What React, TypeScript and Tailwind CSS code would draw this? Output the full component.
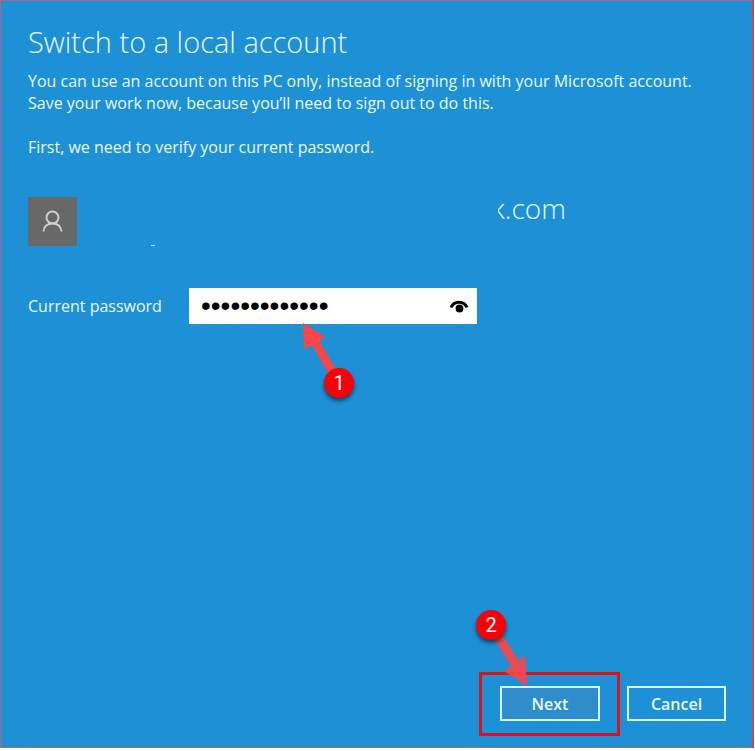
import React, { useState } from 'react';

interface CalloutProps {
  label: string;
  className: string;
  direction: 'up' | 'down';
}

// Numbered red marker with an arrow, laid over the control it points at
const Callout: React.FC<CalloutProps> = ({ label, className, direction }) => (
  <div className={`absolute z-10 pointer-events-none w-[60px] h-[84px] ${className}`}>
    <svg className="absolute inset-0" width="60" height="84" viewBox="0 0 60 84" aria-hidden="true">
      {direction === 'up' ? (
        <path d="M4 3L26 17L20 21L38 51L30 55L13 25L5 29Z" fill="#fb4548" />
      ) : (
        <path d="M17 27L25 23L42 50L49 46L51 76L28 61L35 56Z" fill="#fb4548" fillOpacity="0.9" />
      )}
    </svg>
    <span
      className={`absolute flex items-center justify-center w-[30px] h-[30px] rounded-full bg-[#fb0007] text-white text-xl leading-none font-normal font-['Roboto',sans-serif] shadow-[0_3px_4px_rgba(0,0,0,0.55)] ${direction === 'up' ? 'left-[25px] top-[48px]' : 'left-0 top-0'}`}
    >
      {label}
    </span>
  </div>
);

const App: React.FC = () => {
  const [password, setPassword] = useState('passwordpassw');
  const [visible, setVisible] = useState(false);

  return (
    <div className="min-h-screen flex flex-col bg-white pr-px pb-[3px] font-['Open_Sans','Noto_Sans',sans-serif] text-[#e6f8ff]">
      <form
        onSubmit={(e) => e.preventDefault()}
        className="flex-1 flex flex-col bg-[#1e90d6] border border-[#a66a86] border-r-2 border-r-[#d34050] pt-[23px] pb-[26px] px-[26px]"
      >
        <div className="flex flex-col pl-px">
          <h1 className="text-[29px] leading-9 font-light">Switch to a local account</h1>
          <div className="mt-2.5 text-base leading-[22px]">
            <p>
              You can use an account on this PC only, instead of signing in with your Microsoft account.
              <br />
              Save your work now, because you’ll need to sign out to do this.
            </p>
            <p className="mt-[22px]">First, we need to verify your current password.</p>
          </div>

          {/* Account, the address is mostly hidden */}
          <div className="mt-[39px] flex items-start">
            <div className="w-[49px] h-[49px] bg-[#686868] flex items-center justify-center">
              <svg width="21" height="23" viewBox="0 0 21 23" fill="none" stroke="#cfcfcf" strokeWidth="1.9" aria-hidden="true">
                <circle cx="10.500" cy="7.500" r="6" />
                <path d="M1.500 21.500C2 16.500 5.500 13.500 10.500 13.500S19 16.500 19.500 21.500" />
              </svg>
            </div>
            <div className="ml-[74px] self-end w-1 h-px bg-[#b4e0f5]" />
            <div className="ml-[343px] w-[68px] flex justify-end overflow-hidden text-[28px] leading-[22px] font-light">
              <span>k.com</span>
            </div>
          </div>

          <div className="mt-[42px] flex items-center">
            <label htmlFor="password" className="w-[161px] text-base">Current password</label>
            <div className="relative w-72 h-9 bg-white flex items-center">
              <input
                id="password"
                type={visible ? 'text' : 'password'}
                value={password}
                onChange={(e) => setPassword(e.target.value)}
                className="flex-1 min-w-0 h-full pl-3 bg-transparent text-black text-[28px] font-['Liberation_Sans',sans-serif] outline-none"
              />
              <button
                type="button"
                aria-label="Show password"
                onClick={() => setVisible(!visible)}
                className="w-9 h-full flex items-center justify-center text-black"
              >
                <svg width="20" height="16" viewBox="0 0 20 16" aria-hidden="true">
                  <path d="M2 9.500C5 2.500 15 2.500 18 9.500" fill="none" stroke="currentColor" strokeWidth="3" />
                  <circle cx="10.500" cy="10.500" r="3.900" fill="currentColor" />
                </svg>
              </button>
              <Callout label="1" direction="up" className="left-[110px] top-[32px]" />
            </div>
          </div>
        </div>

        <div className="mt-auto flex justify-end gap-[27px] text-base font-semibold">
          <div className="relative">
            <button type="submit" className="block w-[100px] h-[35px] border-2 border-[#d9f5ff] bg-[#2f8dcc]">Next</button>
            <div className="absolute -top-[14px] -bottom-[15px] -left-[21px] -right-[20px] border-[3px] border-[#d9141f] pointer-events-none" />
            <Callout label="2" direction="down" className="-left-[24px] -top-[76px]" />
          </div>
          <button type="button" className="w-[99px] h-[35px] border-2 border-[#d9f5ff]">Cancel</button>
        </div>
      </form>
    </div>
  );
};

export default App;
